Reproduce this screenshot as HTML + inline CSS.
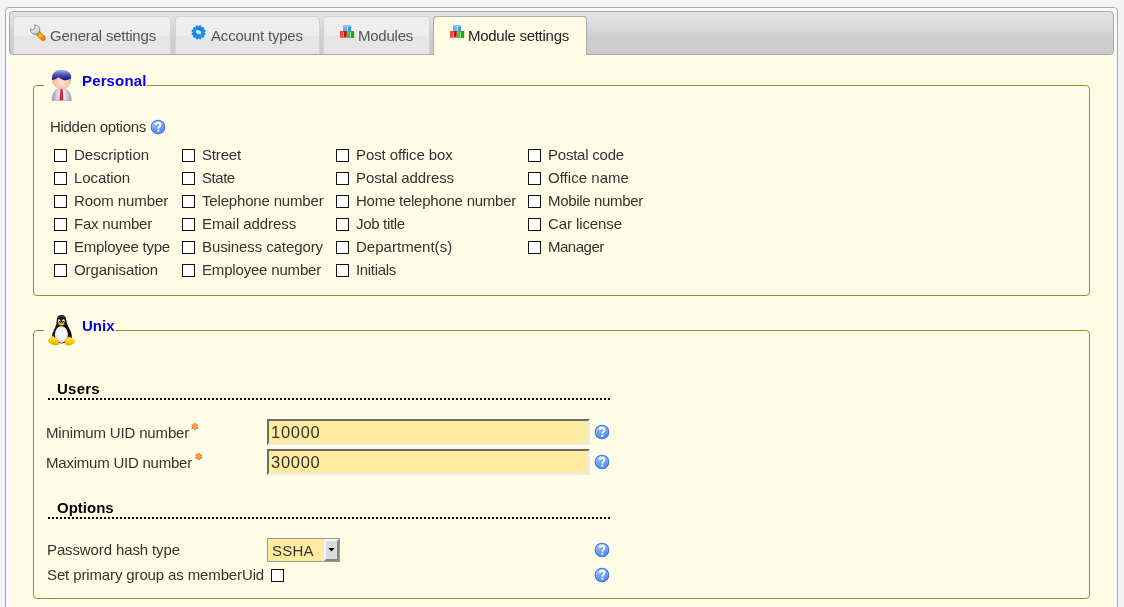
<!DOCTYPE html>
<html><head><meta charset="utf-8"><style>
html,body{margin:0;padding:0;}
body{width:1124px;height:607px;overflow:hidden;background:#f3f3f3;font-family:"Liberation Sans",sans-serif;position:relative;}
.abs{position:absolute;}
#root{position:absolute;left:0;top:0;width:1124px;height:607px;will-change:transform;}
#outer{left:5px;top:7px;width:1111px;height:640px;border:1px solid #a9a9a9;border-radius:4px;background:#f9f9f9;}
#hdr{left:9px;top:11px;width:1103px;height:42px;border:1px solid #a9a9a9;border-radius:4px;
 background:linear-gradient(#e3e3e3 0%,#dadada 35%,#cdcdcd 65%,#cbcbcb 100%);}
#panel{left:9px;top:55px;width:1105px;height:560px;background:#fffde5;}
.tab{position:absolute;top:16px;height:37px;border:1px solid #d3d3d3;border-bottom:0;border-radius:4px 4px 0 0;
 background:linear-gradient(#eeeeee 0%,#eeeeee 48%,#e6e6e6 52%,#e6e6e6 100%);}
.tab.act{border-color:#a9a9a9;background:#fffde5;height:38px;}
.t{position:absolute;font-size:15px;line-height:17px;color:#333;white-space:nowrap;}
.tt{position:absolute;font-size:15px;line-height:17px;color:#555;white-space:nowrap;}
.fs{position:absolute;border:1px solid #a08a30;border-radius:4px;}
.lg{position:absolute;background:#fffde5;}
.cb{position:absolute;width:11px;height:11px;border:1px solid #111;background:#fff;}
.dots{position:absolute;height:0;border-top:2px dotted #000;}
.inp{position:absolute;box-sizing:border-box;width:323px;height:26px;border:2px solid;border-color:#6c6c6c #ececec #ececec #6c6c6c;background:#ffeba0;}
.help{position:absolute;width:16px;height:16px;}
.star{position:absolute;width:8px;height:8px;}
</style></head><body>
<svg width="0" height="0" style="position:absolute">
 <defs>
  <linearGradient id="hg" x1="0.3" y1="0" x2="0.6" y2="1"><stop offset="0" stop-color="#c4dafc"/><stop offset="0.45" stop-color="#7aa6f2"/><stop offset="1" stop-color="#5088ec"/></linearGradient>
  <symbol id="hlp" viewBox="0 0 16 16">
   <circle cx="8" cy="8" r="6.8" fill="url(#hg)" stroke="#3a74e6" stroke-width="1.1"/>
   <path d="M5.8 6.1 Q5.8 3.8 8.1 3.8 Q10.4 3.8 10.4 5.9 Q10.4 7.2 9.1 8 Q8.3 8.5 8.3 9.7" fill="none" stroke="#fff" stroke-width="1.8"/>
   <rect x="7.3" y="10.8" width="2" height="1.9" fill="#fff"/>
  </symbol>
  <symbol id="ast" viewBox="0 0 8 8">
   <g fill="#f27a2a"><circle cx="3.80" cy="1.00" r="1.15"/><circle cx="6.05" cy="2.30" r="1.15"/><circle cx="6.05" cy="4.90" r="1.15"/><circle cx="3.80" cy="6.20" r="1.15"/><circle cx="1.55" cy="4.90" r="1.15"/><circle cx="1.55" cy="2.30" r="1.15"/></g>
   <circle cx="3.8" cy="3.6" r="2.4" fill="#f58c44"/>
   <circle cx="3.8" cy="2.9" r="0.9" fill="#fbc0a0"/>
   <circle cx="3.8" cy="5" r="0.7" fill="#ffc010"/>
  </symbol>
 </defs>
</svg>
<div id="root">
<div id="outer" class="abs"></div><div id="hdr" class="abs"></div><div id="panel" class="abs"></div>
<div class="tab" style="left:13px;width:156px;">
<svg class="abs" style="left:14px;top:6px" width="20" height="20" viewBox="0 0 20 20">
    <defs><linearGradient id="wh" x1="0.2" y1="0" x2="0.8" y2="1"><stop offset="0" stop-color="#ffffff"/><stop offset="0.6" stop-color="#dcdce6"/><stop offset="1" stop-color="#a8acc4"/></linearGradient>
    <linearGradient id="wo" x1="0" y1="0" x2="1" y2="1"><stop offset="0" stop-color="#f89000"/><stop offset="0.5" stop-color="#ffc810"/><stop offset="1" stop-color="#f07800"/></linearGradient></defs>
    <line x1="10.2" y1="10.4" x2="15.2" y2="15.3" stroke="#d06a00" stroke-width="5.2" stroke-linecap="round"/>
    <line x1="10.2" y1="10.4" x2="15.2" y2="15.3" stroke="url(#wo)" stroke-width="3.8" stroke-linecap="round"/>
    <path d="M6.3 2.2 A4.65 4.65 0 1 1 2.6 5.9 A2.6 2.6 0 0 0 6.3 2.2 Z" fill="url(#wh)" stroke="#7c82a4" stroke-width="0.9" stroke-linejoin="round"/>
  </svg>
<div class="tt" style="left:36px;top:10px;letter-spacing:-0.206px;">General settings</div>
</div>
<div class="tab" style="left:175px;width:143px;">
<svg class="abs" style="left:15px;top:8px" width="16" height="16" viewBox="0 0 16 16">
    <defs><linearGradient id="gg" x1="0" y1="0" x2="1" y2="1"><stop offset="0" stop-color="#3aa0ff"/><stop offset="0.45" stop-color="#0a7ef0"/><stop offset="1" stop-color="#28b4ff"/></linearGradient>
    <radialGradient id="gh" cx="0.55" cy="0.55" r="0.6"><stop offset="0" stop-color="#f4f2ea"/><stop offset="0.7" stop-color="#e8ecf0"/><stop offset="1" stop-color="#80c8ff"/></radialGradient></defs>
    <g fill="url(#gg)">
      <circle cx="7.6" cy="7.4" r="5.8"/>
      <circle cx="13.30" cy="8.93" r="1.35"/><circle cx="11.77" cy="11.57" r="1.35"/><circle cx="9.13" cy="13.10" r="1.35"/><circle cx="6.07" cy="13.10" r="1.35"/><circle cx="3.43" cy="11.57" r="1.35"/><circle cx="1.90" cy="8.93" r="1.35"/><circle cx="1.90" cy="5.87" r="1.35"/><circle cx="3.43" cy="3.23" r="1.35"/><circle cx="6.07" cy="1.70" r="1.35"/><circle cx="9.13" cy="1.70" r="1.35"/><circle cx="11.77" cy="3.23" r="1.35"/><circle cx="13.30" cy="5.87" r="1.35"/>
    </g>
    <ellipse cx="7.5" cy="7.1" rx="3.3" ry="2.3" transform="rotate(25 7.5 7.1)" fill="url(#gh)" stroke="#0868d8" stroke-width="0.6"/>
  </svg>
<div class="tt" style="left:35px;top:10px;letter-spacing:-0.184px;">Account types</div>
</div>
<div class="tab" style="left:323px;width:105px;">
<svg class="abs" style="left:16px;top:8px" width="16" height="15" viewBox="0 0 16 15">
    <rect x="3.3" y="0.3" width="7.8" height="6.8" rx="0.6" fill="#3c98f0"/><rect x="3.3" y="0.3" width="3.9" height="6.8" rx="0.6" fill="#64b4fa"/>
    <rect x="3.3" y="0.3" width="7.8" height="1.6" fill="#9cd2ff" opacity="0.8"/><rect x="7" y="1.5" width="0.8" height="5.5" fill="#d8f0ff"/>
    <rect x="0.1" y="6" width="6.7" height="6.6" rx="0.6" fill="#d80e0e"/><rect x="0.1" y="6" width="3.3" height="6.6" rx="0.6" fill="#f04848"/>
    <rect x="3.2" y="7.2" width="0.8" height="5.2" fill="#ffc0c0"/>
    <rect x="6.9" y="6.1" width="7.3" height="6.8" rx="0.6" fill="#1ea81e"/><rect x="6.9" y="6.1" width="3.6" height="6.8" rx="0.6" fill="#44c844"/>
    <rect x="10.2" y="7.3" width="0.8" height="5.4" fill="#c0f0c0"/>
  </svg>
<div class="tt" style="left:34px;top:10px;letter-spacing:-0.242px;">Modules</div>
</div>
<div class="tab act" style="left:433px;width:152px;">
<svg class="abs" style="left:16px;top:8px" width="16" height="15" viewBox="0 0 16 15">
    <rect x="3.3" y="0.3" width="7.8" height="6.8" rx="0.6" fill="#3c98f0"/><rect x="3.3" y="0.3" width="3.9" height="6.8" rx="0.6" fill="#64b4fa"/>
    <rect x="3.3" y="0.3" width="7.8" height="1.6" fill="#9cd2ff" opacity="0.8"/><rect x="7" y="1.5" width="0.8" height="5.5" fill="#d8f0ff"/>
    <rect x="0.1" y="6" width="6.7" height="6.6" rx="0.6" fill="#d80e0e"/><rect x="0.1" y="6" width="3.3" height="6.6" rx="0.6" fill="#f04848"/>
    <rect x="3.2" y="7.2" width="0.8" height="5.2" fill="#ffc0c0"/>
    <rect x="6.9" y="6.1" width="7.3" height="6.8" rx="0.6" fill="#1ea81e"/><rect x="6.9" y="6.1" width="3.6" height="6.8" rx="0.6" fill="#44c844"/>
    <rect x="10.2" y="7.3" width="0.8" height="5.4" fill="#c0f0c0"/>
  </svg>
<div class="tt" style="left:34px;top:10px;letter-spacing:-0.275px;color:#222;">Module settings</div>
</div>
<div class="fs" style="left:33px;top:85px;width:1055px;height:209px;"></div>
<div class="lg" style="left:44px;top:80px;width:103px;height:10px;"></div>
<svg class="abs" style="left:46px;top:66px" width="32" height="38" viewBox="0 0 32 38">
  <defs>
   <linearGradient id="pb" x1="0" y1="0" x2="1" y2="0"><stop offset="0" stop-color="#9296b8"/><stop offset="0.3" stop-color="#d8dae6"/><stop offset="0.6" stop-color="#f4f4f8"/><stop offset="1" stop-color="#9a9ebc"/></linearGradient>
   <radialGradient id="pf" cx="0.5" cy="0.65" r="0.6"><stop offset="0" stop-color="#ffe4d0"/><stop offset="1" stop-color="#f0b088"/></radialGradient>
   <linearGradient id="ph" x1="0" y1="0" x2="0" y2="1"><stop offset="0" stop-color="#a0a8e0"/><stop offset="0.5" stop-color="#4850b0"/><stop offset="1" stop-color="#141478"/></linearGradient>
  </defs>
  <path d="M13.3 23 Q8.8 23.6 7.2 28 Q6 31 5.9 34.4 L25.4 34.4 Q25.2 31 24 28 Q22.2 23.6 18.2 23 Z" fill="url(#pb)" stroke="#8a8eac" stroke-width="0.5"/>
  <path d="M14.5 23.1 L16.7 23.1 L17.3 34.3 L13.4 34.3 Z" fill="#e2202e"/>
  <circle cx="15.6" cy="13.6" r="9.4" fill="url(#pf)" stroke="#d8a080" stroke-width="0.4"/>
  <path d="M6 14 Q5.4 4.1 15.6 4.1 Q25.8 4.1 25.2 12.6 Q22 14.6 18.2 14.2 Q14.6 13.4 12.6 11.2 Q9.4 13.6 6 14 Z" fill="url(#ph)"/>
</svg>
<div class="t" style="left:82px;top:72px;letter-spacing:0.143px;color:#0000ee;font-weight:bold;">Personal</div>
<div class="t" style="left:50px;top:118px;letter-spacing:-0.296px;">Hidden options</div>
<svg class="help" style="left:150px;top:119px" viewBox="0 0 16 16"><use href="#hlp"/></svg>
<div class="cb" style="left:54px;top:149px"></div>
<div class="t" style="left:74px;top:146px;letter-spacing:0.006px;">Description</div>
<div class="cb" style="left:54px;top:172px"></div>
<div class="t" style="left:74px;top:169px;letter-spacing:-0.071px;">Location</div>
<div class="cb" style="left:54px;top:195px"></div>
<div class="t" style="left:74px;top:192px;letter-spacing:-0.076px;">Room number</div>
<div class="cb" style="left:54px;top:218px"></div>
<div class="t" style="left:74px;top:215px;letter-spacing:-0.203px;">Fax number</div>
<div class="cb" style="left:54px;top:241px"></div>
<div class="t" style="left:74px;top:238px;letter-spacing:-0.254px;">Employee type</div>
<div class="cb" style="left:54px;top:264px"></div>
<div class="t" style="left:74px;top:261px;letter-spacing:-0.080px;">Organisation</div>
<div class="cb" style="left:182px;top:149px"></div>
<div class="t" style="left:202px;top:146px;letter-spacing:-0.170px;">Street</div>
<div class="cb" style="left:182px;top:172px"></div>
<div class="t" style="left:202px;top:169px;letter-spacing:-0.455px;">State</div>
<div class="cb" style="left:182px;top:195px"></div>
<div class="t" style="left:202px;top:192px;letter-spacing:-0.173px;">Telephone number</div>
<div class="cb" style="left:182px;top:218px"></div>
<div class="t" style="left:202px;top:215px;letter-spacing:-0.074px;">Email address</div>
<div class="cb" style="left:182px;top:241px"></div>
<div class="t" style="left:202px;top:238px;letter-spacing:-0.096px;">Business category</div>
<div class="cb" style="left:182px;top:264px"></div>
<div class="t" style="left:202px;top:261px;letter-spacing:-0.178px;">Employee number</div>
<div class="cb" style="left:336px;top:149px"></div>
<div class="t" style="left:356px;top:146px;letter-spacing:-0.092px;">Post office box</div>
<div class="cb" style="left:336px;top:172px"></div>
<div class="t" style="left:356px;top:169px;letter-spacing:-0.087px;">Postal address</div>
<div class="cb" style="left:336px;top:195px"></div>
<div class="t" style="left:356px;top:192px;letter-spacing:-0.241px;">Home telephone number</div>
<div class="cb" style="left:336px;top:218px"></div>
<div class="t" style="left:356px;top:215px;letter-spacing:-0.313px;">Job title</div>
<div class="cb" style="left:336px;top:241px"></div>
<div class="t" style="left:356px;top:238px;letter-spacing:0.024px;">Department(s)</div>
<div class="cb" style="left:336px;top:264px"></div>
<div class="t" style="left:356px;top:261px;letter-spacing:-0.333px;">Initials</div>
<div class="cb" style="left:528px;top:149px"></div>
<div class="t" style="left:548px;top:146px;letter-spacing:-0.226px;">Postal code</div>
<div class="cb" style="left:528px;top:172px"></div>
<div class="t" style="left:548px;top:169px;letter-spacing:0.030px;">Office name</div>
<div class="cb" style="left:528px;top:195px"></div>
<div class="t" style="left:548px;top:192px;letter-spacing:-0.324px;">Mobile number</div>
<div class="cb" style="left:528px;top:218px"></div>
<div class="t" style="left:548px;top:215px;letter-spacing:-0.094px;">Car license</div>
<div class="cb" style="left:528px;top:241px"></div>
<div class="t" style="left:548px;top:238px;letter-spacing:-0.482px;">Manager</div>
<div class="fs" style="left:33px;top:330px;width:1055px;height:267px;"></div>
<div class="lg" style="left:44px;top:325px;width:72px;height:10px;"></div>
<svg class="abs" style="left:44px;top:312px" width="36" height="36" viewBox="0 0 36 36">
  <defs>
   <radialGradient id="pw" cx="0.5" cy="0.4" r="0.65"><stop offset="0" stop-color="#ffffff"/><stop offset="0.7" stop-color="#eeeeee"/><stop offset="1" stop-color="#a8a8a8"/></radialGradient>
   <linearGradient id="py" x1="0" y1="0" x2="0" y2="1"><stop offset="0" stop-color="#ffe870"/><stop offset="0.6" stop-color="#ffd000"/><stop offset="1" stop-color="#e8a800"/></linearGradient>
  </defs>
  <path d="M17.5 3 Q12.9 3 12.8 8 Q12.8 12 11 16 Q7.8 21 8.2 25.5 Q9 30.5 17.5 31.5 Q26 30.5 27.8 25.5 Q28.2 21 25 16 Q22.4 12 22.3 8 Q22.1 3 17.5 3 Z" fill="#101010"/>
  <path d="M14 5.5 Q17.5 3.6 21 5.5" stroke="#606060" stroke-width="0.8" fill="none"/>
  <ellipse cx="17.4" cy="22.6" rx="6.6" ry="8.4" fill="url(#pw)"/>
  <ellipse cx="15.2" cy="9" rx="1.4" ry="1.7" fill="#f4f4f4"/><ellipse cx="19.4" cy="9" rx="1.4" ry="1.7" fill="#f4f4f4"/>
  <circle cx="15.5" cy="9.4" r="0.7" fill="#000"/><circle cx="19.1" cy="9.4" r="0.7" fill="#000"/>
  <path d="M13.8 11.8 Q17.2 9.6 20.8 11.8 Q17.4 15.2 13.8 11.8 Z" fill="#f8c400" stroke="#c88a00" stroke-width="0.4"/>
  <path d="M4.4 28.6 Q6 25.2 9 24.2 Q12 25.4 14 28.4 Q15.3 31 14.6 32.6 Q11 33.6 7.4 32.1 Q4.4 30.6 4.4 28.6 Z" fill="url(#py)" stroke="#d09800" stroke-width="0.5"/>
  <path d="M21 29.6 Q22.4 25.6 25 24.8 Q28.2 25.6 31 29.4 Q30 31.6 27 32.6 Q23.6 33.6 21.5 32.6 Q20.8 31.2 21 29.6 Z" fill="url(#py)" stroke="#d09800" stroke-width="0.5"/>
</svg>
<div class="t" style="left:82px;top:317px;color:#0000ee;font-weight:bold;">Unix</div>
<div class="t" style="left:57px;top:380px;letter-spacing:0.250px;color:#000;font-weight:bold;">Users</div>
<div class="dots" style="left:48px;top:398px;width:562px;"></div>
<div class="t" style="left:46px;top:424px;letter-spacing:-0.152px;">Minimum UID number</div>
<svg class="star" style="left:191px;top:423px" viewBox="0 0 8 8"><use href="#ast"/></svg>
<div class="inp" style="left:267px;top:419px"></div>
<div class="t" style="left:271px;top:424px;letter-spacing:0.700px;font-size:16.5px;">10000</div>
<svg class="help" style="left:594px;top:424px" viewBox="0 0 16 16"><use href="#hlp"/></svg>
<div class="t" style="left:46px;top:454px;letter-spacing:-0.224px;">Maximum UID number</div>
<svg class="star" style="left:195px;top:453px" viewBox="0 0 8 8"><use href="#ast"/></svg>
<div class="inp" style="left:267px;top:449px"></div>
<div class="t" style="left:271px;top:454px;letter-spacing:0.700px;font-size:16.5px;">30000</div>
<svg class="help" style="left:594px;top:454px" viewBox="0 0 16 16"><use href="#hlp"/></svg>
<div class="t" style="left:57px;top:499px;color:#000;font-weight:bold;">Options</div>
<div class="dots" style="left:48px;top:517px;width:562px;"></div>
<div class="t" style="left:47px;top:541px;letter-spacing:-0.119px;">Password hash type</div>
<div class="abs" style="left:267px;top:538px;width:71px;height:22px;border:1px solid #9a9a9a;background:#ffeba0;"></div>
<div class="abs" style="left:324px;top:539px;width:11px;height:18px;background:#dcdcdc;border-style:solid;border-width:2px;border-color:#f6f6f6 #858585 #858585 #f6f6f6;"></div>
<svg class="abs" style="left:328px;top:548px" width="7" height="4" viewBox="0 0 7 4"><path d="M0.4 0 H6.6 L3.5 3.6 Z" fill="#000"/></svg>
<div class="t" style="left:272px;top:542px;letter-spacing:0.200px;color:#333;">SSHA</div>
<svg class="help" style="left:594px;top:542px" viewBox="0 0 16 16"><use href="#hlp"/></svg>
<div class="t" style="left:47px;top:566px;letter-spacing:-0.128px;">Set primary group as memberUid</div>
<div class="cb" style="left:271px;top:569px"></div>
<svg class="help" style="left:594px;top:567px" viewBox="0 0 16 16"><use href="#hlp"/></svg>
</div>
</body></html>
